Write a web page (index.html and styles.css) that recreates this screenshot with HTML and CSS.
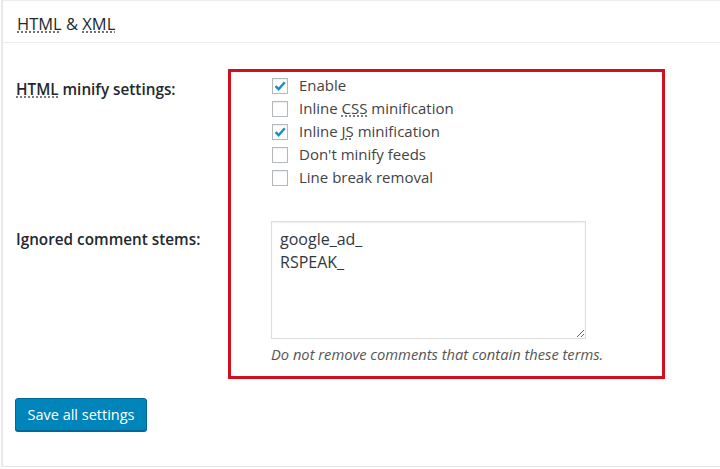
FILE: index.html
```html
<!DOCTYPE html>
<html lang="en">
<head>
    <meta charset="UTF-8">
    <meta name="viewport" content="width=device-width, initial-scale=1.0">
    <title>HTML &amp; XML settings</title>
    <link rel="stylesheet" href="styles.css">
</head>
<body>
    <div class="panel">
        <h2 class="panel-title"><abbr title="HyperText Markup Language">HTML</abbr> &amp; <abbr title="Extensible Markup Language">XML</abbr></h2>

        <div class="form-table">
            <div class="highlight"></div>

            <div class="th th-first"><abbr title="HyperText Markup Language">HTML</abbr> minify settings:</div>
            <div class="td td-first">
                <label class="check-row">
                    <span class="box"><svg viewBox="0 0 16 16" width="16" height="16"><path d="M3.6 8.2 L6.6 11.2 L12.8 4.2" /></svg></span>
                    <span>Enable</span>
                </label>
                <label class="check-row">
                    <span class="box"></span>
                    <span>Inline <abbr title="Cascading Style Sheets">CSS</abbr> minification</span>
                </label>
                <label class="check-row">
                    <span class="box"><svg viewBox="0 0 16 16" width="16" height="16"><path d="M3.6 8.2 L6.6 11.2 L12.8 4.2" /></svg></span>
                    <span>Inline <abbr title="JavaScript">JS</abbr> minification</span>
                </label>
                <label class="check-row">
                    <span class="box"></span>
                    <span>Don't minify feeds</span>
                </label>
                <label class="check-row">
                    <span class="box"></span>
                    <span>Line break removal</span>
                </label>
            </div>

            <div class="th th-second">Ignored comment stems:</div>
            <div class="td td-second">
                <textarea class="stems" rows="4">google_ad_
RSPEAK_</textarea>
                <p class="description">Do not remove comments that contain these terms.</p>
            </div>
        </div>

        <button class="button-primary">Save all settings</button>
    </div>
</body>
</html>
```

FILE: styles.css
```css
body {
    margin: 0;
    background-color: #fff;
    font-family: 'Open Sans', 'Noto Sans', sans-serif;
    font-size: 15px;
    color: #444;
}
.panel {
    height: 465px;
    margin-left: 1px;
    border-left: 2px solid #e9e9e9;
    border-top: 1px solid #ececec;
    border-bottom: 1px solid #e5e5e5;
    padding-left: 13px;
}
.panel-title {
    margin: 0 0 0 -13px;
    padding-left: 14px;
    height: 41px;
    line-height: 45px;
    font-size: 16.5px;
    font-weight: normal;
    color: #23282d;
    border-bottom: 1px solid #ececec;
}
abbr {
    text-decoration: underline dotted;
    text-decoration-color: #555;
    text-underline-offset: 2px;
}
.form-table {
    display: grid;
    grid-template-columns: 212px 437px;
    margin-top: 26px;
}
.highlight {
    grid-column: 2;
    grid-row: 1 / span 2;
    border: 3px solid #d0101c;
}
.th {
    grid-column: 1;
    font-size: 15.3px;
    font-weight: 600;
    color: #23282d;
    line-height: 23px;
}
.th-first {
    grid-row: 1;
    padding-top: 9px;
}
.th-second {
    grid-row: 2;
    padding-top: 37px;
}
.td {
    grid-column: 2;
    padding-left: 44px;
}
.td-first {
    grid-row: 1;
    padding-top: 4px;
    padding-bottom: 3px;
}
.td-second {
    grid-row: 2;
    padding-top: 30px;
    padding-bottom: 13px;
}
.check-row {
    display: flex;
    align-items: center;
    height: 23px;
    gap: 11px;
    color: #444;
}
.check-row .box {
    margin-top: 2px;
}
.box {
    width: 16px;
    height: 16px;
    box-sizing: border-box;
    border: 1px solid #b4b9be;
    background: #fff;
    box-shadow: inset 0 1px 2px rgba(0,0,0,0.07);
    position: relative;
}
.box svg {
    position: absolute;
    left: -1px;
    top: -1px;
}
.box path {
    fill: none;
    stroke: #1e8cbe;
    stroke-width: 2.4;
}
.stems {
    display: block;
    width: 315px;
    height: 118px;
    box-sizing: border-box;
    margin: 0 0 0 -1px;
    padding: 6px 8px;
    border: 1px solid #ddd;
    box-shadow: inset 0 1px 2px rgba(0,0,0,0.07);
    font-family: 'Open Sans', 'Noto Sans', sans-serif;
    font-size: 16px;
    line-height: 23px;
    color: #32373c;
}
.description {
    margin: 4px 0 0 -1px;
    line-height: 23px;
    font-size: 14.7px;
    font-style: italic;
    color: #555;
}
.button-primary {
    display: block;
    margin-top: 19px;
    margin-left: -1px;
    width: 132px;
    height: 33px;
    background: #0085ba;
    border: 1px solid #006799;
    border-radius: 3px;
    box-shadow: 0 1px 0 #006799;
    color: #fff;
    font-family: 'Open Sans', 'Noto Sans', sans-serif;
    font-size: 14.5px;
    cursor: pointer;
}
```
